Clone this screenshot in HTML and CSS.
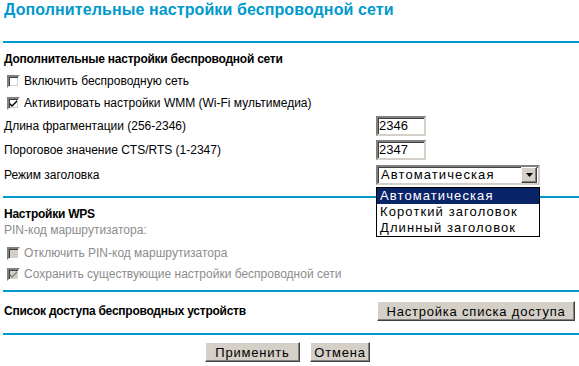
FILE: index.html
```html
<!DOCTYPE html>
<html lang="ru">
<head>
  <meta charset="UTF-8" />
  <title>Дополнительные настройки беспроводной сети</title>
  <link rel="stylesheet" href="styles.css">
</head>
<body>
  <h1 class="page-title">Дополнительные настройки беспроводной сети</h1>
  <div class="rule"></div>

  <div class="row heading">Дополнительные настройки беспроводной сети</div>
  <div class="row check-row">
    <span class="cb"></span>
    <span>Включить беспроводную сеть</span>
  </div>
  <div class="row check-row">
    <span class="cb checked"><svg width="9" height="9" viewBox="0 0 9 9"><path d="M1 4 L3 6 L8 1 L8 3 L3 8 L1 6 Z" fill="#000"/></svg></span>
    <span>Активировать настройки WMM (Wi-Fi мультимедиа)</span>
  </div>
  <div class="row field frag">
    <span class="label">Длина фрагментации (256-2346)</span>
    <span class="text-input">2346</span>
  </div>
  <div class="row field cts">
    <span class="label">Пороговое значение CTS/RTS (1-2347)</span>
    <span class="text-input">2347</span>
  </div>
  <div class="row field mode">
    <span class="label">Режим заголовка</span>
    <div class="select-wrap">
      <div class="select">
        <span class="select-value">Автоматическая</span>
        <span class="select-btn"><svg width="7" height="4" viewBox="0 0 7 4"><path d="M0 0 H7 L3.5 4 Z" fill="#000"/></svg></span>
      </div>
      <ul class="select-list">
        <li class="selected">Автоматическая</li>
        <li>Короткий заголовок</li>
        <li>Длинный заголовок</li>
      </ul>
    </div>
  </div>
  <div class="rule rule-wps"></div>

  <div class="row heading wps">Настройки WPS</div>
  <div class="row muted pin">PIN-код маршрутизатора:</div>
  <div class="row check-row muted">
    <span class="cb disabled"></span>
    <span>Отключить PIN-код маршрутизатора</span>
  </div>
  <div class="row check-row muted last">
    <span class="cb disabled checked"><svg width="9" height="9" viewBox="0 0 9 9"><path d="M1 4 L3 6 L8 1 L8 3 L3 8 L1 6 Z" fill="#808080"/></svg></span>
    <span>Сохранить существующие настройки беспроводной сети</span>
  </div>
  <div class="rule rule-acl"></div>

  <div class="row field acl">
    <span class="label heading-text">Список доступа беспроводных устройств</span>
    <button class="btn btn-wide">Настройка списка доступа</button>
  </div>
  <div class="rule rule-bottom"></div>

  <div class="actions">
    <button class="btn btn-apply">Применить</button>
    <button class="btn btn-cancel">Отмена</button>
  </div>
</body>
</html>
```

FILE: styles.css
```css
body {
  margin: 0;
  font-family: "Liberation Sans", Arial, sans-serif;
  font-size: 12px;
  color: #000;
  background: #fff;
  width: 579px;
  overflow: hidden;
}
.page-title {
  margin: 0 0 21px 4px;
  font-size: 16px;
  letter-spacing: 0.1px;
  line-height: 20px;
  font-weight: bold;
  color: #0099cc;
}
.rule {
  height: 2px;
  background: #0099cc;
  margin-left: 3px;
}
.row {
  display: flex;
  align-items: center;
  padding-left: 4px;
  height: 22px;
}
.heading {
  margin-top: 5px;
  font-weight: bold;
  letter-spacing: -0.25px;
}
.heading-text {
  font-weight: bold;
  letter-spacing: -0.25px;
}
.check-row {
  padding-left: 7px;
  gap: 4px;
}
.cb {
  width: 9px;
  height: 9px;
  border: 2px solid;
  border-color: #808080 #fff #fff #808080;
  box-shadow: inset 1px 1px #404040, inset -1px -1px #d4d0c8;
  background: #fff;
  display: flex;
  align-items: center;
  justify-content: center;
  padding: 0;
}
.cb.disabled {
  background: #d4d0c8;
}
.field {
  height: 24px;
}
.frag {
  height: 23px;
}
.cts, .mode {
  height: 25px;
}
.label {
  width: 372px;
  flex: none;
}
.text-input {
  width: 45px;
  height: 16px;
  line-height: 16px;
  font-size: 13px;
  padding-left: 1px;
  border: 2px solid;
  border-color: #808080 #d4d0c8 #d4d0c8 #808080;
  box-shadow: inset 1px 1px #404040;
  background: #fff;
}
.select-wrap {
  position: relative;
}
.select {
  width: 160px;
  height: 16px;
  border: 2px solid;
  border-color: #808080 #d4d0c8 #d4d0c8 #808080;
  box-shadow: inset 1px 1px #404040;
  background: #fff;
  display: flex;
  align-items: center;
  justify-content: space-between;
  font-size: 13px;
  letter-spacing: 1.1px;
}
.select-value {
  padding-left: 3px;
}
.select-btn {
  box-sizing: border-box;
  width: 16px;
  height: 16px;
  margin-right: 1px;
  background: #d4d0c8;
  border: 1px solid;
  border-color: #fff #404040 #404040 #fff;
  box-shadow: inset -1px -1px #808080;
  display: flex;
  align-items: center;
  justify-content: center;
}
.select-list {
  position: absolute;
  top: 22px;
  left: 0;
  width: 162px;
  margin: 0;
  padding: 0;
  list-style: none;
  border: 1px solid #000;
  background: #fff;
  font-size: 13px;
  letter-spacing: 1.1px;
  z-index: 2;
}
.select-list li {
  height: 16px;
  line-height: 16px;
  padding-left: 3px;
}
.select-list .selected {
  background: #0a246a;
  color: #fff;
}
.rule-wps {
  margin-top: 9px;
}
.wps {
  margin-top: 8px;
  height: 16px;
}
.muted {
  color: #8c8c8c;
}
.pin {
  height: 16px;
}
.pin + .check-row {
  margin-top: 4px;
}
.last {
  height: 20px;
}
.rule-acl {
  margin-top: 6px;
}
.acl {
  margin-top: 8px;
  height: 22px;
}
.btn {
  font-family: "Liberation Sans", Arial, sans-serif;
  font-size: 13px;
  letter-spacing: 0.8px;
  color: #000;
  background: #d4d0c8;
  border: 1px solid;
  border-color: #fff #404040 #404040 #fff;
  box-shadow: inset -1px -1px #808080;
  height: 20px;
  padding: 0;
  margin: 0;
}
.btn-wide {
  width: 198px;
  margin-left: 1px;
}
.rule-bottom {
  margin-top: 11px;
}
.actions {
  display: flex;
  gap: 10px;
  padding-left: 205px;
  margin-top: 7px;
}
.btn-apply {
  width: 95px;
}
.btn-cancel {
  width: 60px;
}
```
